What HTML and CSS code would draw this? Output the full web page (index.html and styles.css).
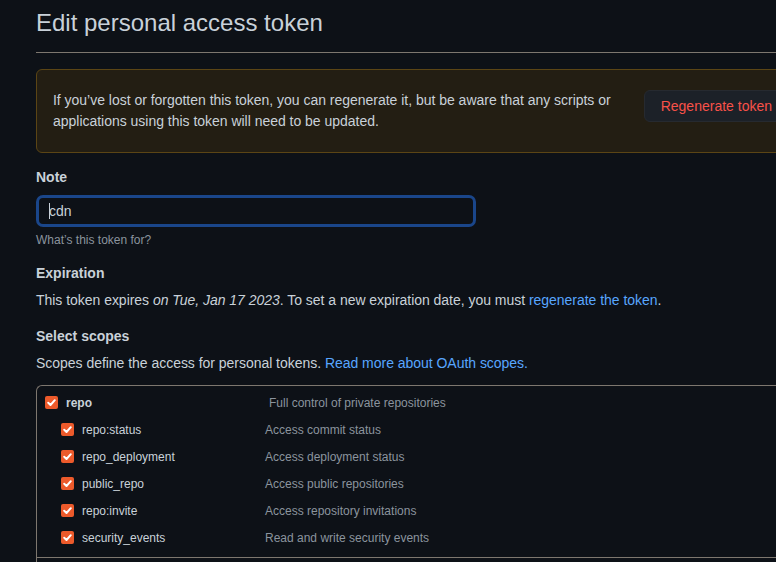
FILE: index.html
```html
<!DOCTYPE html>
<html>
<head>
<meta charset="utf-8">
<link rel="stylesheet" href="styles.css">
</head>
<body>
<div class="page">
  <div class="header">
    <h1 class="title">Edit personal access token</h1>
  </div>

  <div class="flash">
    <p class="flash-text">If you’ve lost or forgotten this token, you can regenerate it, but be aware that any scripts or applications using this token will need to be updated.</p>
    <button class="btn-danger">Regenerate token</button>
  </div>

  <div class="group note-group">
    <div class="label">Note</div>
    <div class="input"><span class="caret"></span>cdn</div>
    <div class="hint">What’s this token for?</div>
  </div>

  <div class="label expiration">Expiration</div>
  <p class="text mt6">This token expires <em>on Tue, Jan 17 2023</em>. To set a new expiration date, you must <a class="link">regenerate the token</a>.</p>

  <div class="label scopes-label">Select scopes</div>
  <p class="text mt6">Scopes define the access for personal tokens. <a class="link">Read more about OAuth scopes.</a></p>

  <div class="scope-box">
    <div class="scope-group">
      <div class="row parent">
        <span class="cb"><svg viewBox="0 0 13 13" width="13" height="13"><path d="M3.2 6.8 L5.5 9 L9.8 4.2" fill="none" stroke="#fff" stroke-width="2" stroke-linecap="round" stroke-linejoin="round"/></svg></span>
        <span class="name bold">repo</span>
        <span class="desc">Full control of private repositories</span>
      </div>
      <div class="row child">
        <span class="cb"><svg viewBox="0 0 13 13" width="13" height="13"><path d="M3.2 6.8 L5.5 9 L9.8 4.2" fill="none" stroke="#fff" stroke-width="2" stroke-linecap="round" stroke-linejoin="round"/></svg></span>
        <span class="name">repo:status</span>
        <span class="desc">Access commit status</span>
      </div>
      <div class="row child">
        <span class="cb"><svg viewBox="0 0 13 13" width="13" height="13"><path d="M3.2 6.8 L5.5 9 L9.8 4.2" fill="none" stroke="#fff" stroke-width="2" stroke-linecap="round" stroke-linejoin="round"/></svg></span>
        <span class="name">repo_deployment</span>
        <span class="desc">Access deployment status</span>
      </div>
      <div class="row child">
        <span class="cb"><svg viewBox="0 0 13 13" width="13" height="13"><path d="M3.2 6.8 L5.5 9 L9.8 4.2" fill="none" stroke="#fff" stroke-width="2" stroke-linecap="round" stroke-linejoin="round"/></svg></span>
        <span class="name">public_repo</span>
        <span class="desc">Access public repositories</span>
      </div>
      <div class="row child">
        <span class="cb"><svg viewBox="0 0 13 13" width="13" height="13"><path d="M3.2 6.8 L5.5 9 L9.8 4.2" fill="none" stroke="#fff" stroke-width="2" stroke-linecap="round" stroke-linejoin="round"/></svg></span>
        <span class="name">repo:invite</span>
        <span class="desc">Access repository invitations</span>
      </div>
      <div class="row child">
        <span class="cb"><svg viewBox="0 0 13 13" width="13" height="13"><path d="M3.2 6.8 L5.5 9 L9.8 4.2" fill="none" stroke="#fff" stroke-width="2" stroke-linecap="round" stroke-linejoin="round"/></svg></span>
        <span class="name">security_events</span>
        <span class="desc">Read and write security events</span>
      </div>
    </div>
    <div class="scope-group next"></div>
  </div>
</div>
</body>
</html>
```

FILE: styles.css
```css
html, body {
  margin: 0;
  padding: 0;
  background: #0d1117;
  overflow: hidden;
  height: 562px;
}
body {
  font-family: "Liberation Sans", Arial, sans-serif;
  color: #c9d1d9;
  font-size: 14px;
}
.page {
  margin-left: 36px;
  width: 770px;
}
.header {
  padding-top: 8px;
  padding-bottom: 14px;
  border-bottom: 1px solid #7d776f;
}
.title {
  margin: 0;
  font-size: 24px;
  line-height: 30px;
  font-weight: 400;
  color: #c9d1d9;
}
.flash {
  margin-top: 16px;
  display: flex;
  align-items: flex-start;
  padding: 20px 16px;
  border: 1px solid #5b4515;
  background: #231e13;
  border-radius: 6px;
}
.flash-text {
  margin: 0;
  flex: 1;
  line-height: 21px;
  padding-right: 22px;
  letter-spacing: -0.02px;
}
.btn-danger {
  flex: none;
  height: 32px;
  padding: 0 16px;
  background: #1c2128;
  border: 1px solid #262a30;
  border-radius: 6px;
  color: #f85149;
  font-family: "Liberation Sans", Arial, sans-serif;
  font-size: 14px;
}
.label {
  font-weight: 700;
  line-height: 21px;
  font-size: 14px;
}
.note-group {
  margin-top: 14px;
}
.input {
  margin-top: 7px;
  width: 440px;
  height: 32px;
  box-sizing: border-box;
  border: 3px solid #1a468a;
  border-radius: 7px;
  padding-left: 10px;
  line-height: 26px;
  font-size: 14px;
  color: #c9d1d9;
  display: flex;
  align-items: center;
}
.caret {
  display: inline-block;
  width: 1px;
  height: 16px;
  background: #c9d1d9;
  margin-right: -1px;
}
.hint {
  margin-top: 4px;
  font-size: 12px;
  line-height: 18px;
  color: #8b949e;
}
.expiration {
  margin-top: 14px;
}
.scopes-label {
  margin-top: 15px;
}
.text {
  margin: 0;
  line-height: 21px;
  letter-spacing: -0.03px;
}
.mt6 {
  margin-top: 6px;
}
.link {
  color: #58a6ff;
  text-decoration: none;
}
.scope-box {
  margin-top: 11px;
  border: 1px solid #7d776f;
  border-right: none;
  border-radius: 6px 0 0 6px;
  height: 200px;
}
.scope-group {
  padding: 3px 0 6px;
  border-bottom: 1px solid #7d776f;
}
.row {
  display: flex;
  align-items: center;
  height: 27px;
  font-size: 12px;
}
.row.parent {
  padding-left: 8px;
}
.row.child {
  padding-left: 24px;
}
.cb {
  width: 13px;
  height: 13px;
  border-radius: 2px;
  background: #ec5a2b;
  display: inline-flex;
  flex: none;
}
.cb svg {
  display: block;
}
.name {
  margin-left: 8px;
  color: #c9d1d9;
}
.parent .name {
  width: 203px;
}
.child .name {
  width: 183px;
}
.bold {
  font-weight: 700;
}
.desc {
  color: #8b949e;
}
```
